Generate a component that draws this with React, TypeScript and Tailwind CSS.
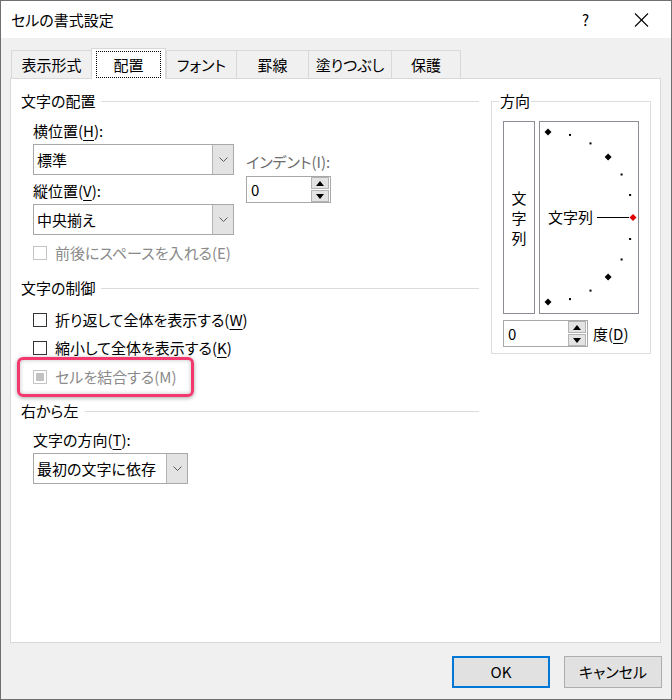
import React from "react";

const Chevron = () => (
  <svg width="9" height="5" viewBox="0 0 9 5">
    <polyline points="0.5,0.5 4.5,4.5 8.5,0.5" fill="none" stroke="#5a5a5a" strokeWidth="1" />
  </svg>
);

const Select = ({ text, w }: { text: string; w: string }) => (
  <div className={`flex h-[31px] ${w} border border-[#a8a8a8] bg-white`}>
    <div className="flex flex-1 items-center pl-[3px]">{text}</div>
    <div className="flex w-[21px] items-center justify-center border-l border-[#b4b4b4] bg-[#e3e3e3]">
      <Chevron />
    </div>
  </div>
);

const SpinButtons = () => (
  <div className="mr-[1px] flex flex-col gap-px">
    <div className="flex h-[12px] w-[18px] items-center justify-center border border-[#b4b4b4] bg-[#e3e3e3]">
      <svg width="8" height="5" viewBox="0 0 8 5">
        <polygon points="0,5 8,5 4,0" fill="#000" />
      </svg>
    </div>
    <div className="flex h-[12px] w-[18px] items-center justify-center border border-[#b4b4b4] bg-[#e3e3e3]">
      <svg width="8" height="5" viewBox="0 0 8 5">
        <polygon points="0,0 8,0 4,5" fill="#000" />
      </svg>
    </div>
  </div>
);

const Spinner = () => (
  <div className="flex h-[27px] w-[85px] items-center border border-[#a8a8a8] bg-white">
    <span className="flex-1 pl-[4px]">0</span>
    <SpinButtons />
  </div>
);

const GroupHeader = ({ text, className }: { text: string; className?: string }) => (
  <div className={`flex h-[20px] items-center gap-[6px] ${className ?? ""}`}>
    <span>{text}</span>
    <div className="h-px flex-1 bg-[#dcdcdc]" />
  </div>
);

const U = ({ c }: { c: string }) => <span className="underline underline-offset-[3px]">{c}</span>;

const Check = ({ children, disabled, mixed }: { children: React.ReactNode; disabled?: boolean; mixed?: boolean }) => (
  <div className="flex h-[20px] items-center gap-[8px]">
    <div
      className={`flex h-[14px] w-[14px] items-center justify-center border bg-white ${
        disabled ? "border-[#c4c4c4]" : "border-[#333333]"
      }`}
    >
      {mixed && <div className="h-[8px] w-[8px] bg-[#c2c2c2]" />}
    </div>
    <span className={disabled ? "text-[#8a8a8a]" : "text-black"}>{children}</span>
  </div>
);

const tabs = [
  { t: "表示形式", w: "w-[80px]" },
  { t: "配置", w: "w-[75px]", sel: true },
  { t: "フォント", w: "w-[70px]" },
  { t: "罫線", w: "w-[72px]" },
  { t: "塗りつぶし", w: "w-[83px]" },
  { t: "保護", w: "w-[70px]", last: true },
];

const Dial = () => {
  const cx = 8;
  const cy = 95;
  const r = 85;
  const items: React.ReactNode[] = [];
  for (let a = 90; a >= -90; a -= 15) {
    if (a === 0) continue;
    const rad = (a * Math.PI) / 180;
    const x = cx + r * Math.cos(rad);
    const y = cy - r * Math.sin(rad);
    if (a % 45 === 0) {
      items.push(
        <polygon
          key={a}
          points={`${x},${y - 3.5} ${x + 3.5},${y} ${x},${y + 3.5} ${x - 3.5},${y}`}
          fill="#000"
        />
      );
    } else {
      items.push(<rect key={a} x={x - 1} y={y - 1} width="2" height="2" fill="#000" />);
    }
  }
  return (
    <svg width="98" height="191" viewBox="0 0 98 191">
      {items}
      <text x="8" y="100.5" fontSize="15" fontFamily="'Noto Sans CJK JP', sans-serif" fill="#000">
        文字列
      </text>
      <line x1="57" y1="95.5" x2="89" y2="95.5" stroke="#000" strokeWidth="1" />
      <polygon points="93,92 96.5,95.5 93,99 89.5,95.5" fill="#e00000" />
    </svg>
  );
};

export default function App() {
  return (
    <div className="flex h-[700px] w-[672px] flex-col border border-[#6f6f6f] bg-[#f0f0f0] font-['Noto_Sans_CJK_JP',sans-serif] text-[15px] leading-[20px] text-black [font-feature-settings:'palt']">
      {/* Title bar */}
      <div className="flex h-[37px] items-center bg-white pl-[10px] pr-[22px]">
        <span>セルの書式設定</span>
        <span className="ml-auto">?</span>
        <svg className="ml-[45px]" width="15" height="14" viewBox="0 0 15 14">
          <line x1="1" y1="0.5" x2="14" y2="13.5" stroke="#000" strokeWidth="1.1" />
          <line x1="14" y1="0.5" x2="1" y2="13.5" stroke="#000" strokeWidth="1.1" />
        </svg>
      </div>

      {/* Tabs */}
      <div className="mt-[10px] ml-[10px] flex h-[30px] items-end">
        {tabs.map((tab) =>
          tab.sel ? (
            <div
              key={tab.t}
              className={`relative z-10 -mb-px flex h-[31px] ${tab.w} items-start justify-center border-x border-t border-[#d9d9d9] bg-white pt-[2px]`}
            >
              <div className="flex h-[27px] w-[65px] items-center justify-center border border-dotted border-black">
                {tab.t}
              </div>
            </div>
          ) : (
            <div
              key={tab.t}
              className={`flex h-[28px] ${tab.w} items-center justify-center border-l border-t border-[#d9d9d9] ${
                tab.last ? "border-r" : ""
              }`}
            >
              {tab.t}
            </div>
          )
        )}
      </div>

      {/* Panel */}
      <div className="ml-[9px] flex h-[565px] w-[651px] border border-[#d9d9d9] bg-white pl-[10px] pt-[12px]">
        {/* Left column */}
        <div className="flex w-[458px] flex-col">
          <GroupHeader text="文字の配置" />
          <div className="flex flex-col pl-[12px]">
            <div className="mt-[10px] h-[20px]">
              横位置(<U c="H" />):
            </div>
            <div className="mt-[3px] flex items-start">
              <div className="flex flex-col">
                <Select text="標準" w="w-[201px]" />
                <div className="mt-[6px] h-[20px]">
                  縦位置(<U c="V" />):
                </div>
                <div className="mt-[3px]">
                  <Select text="中央揃え" w="w-[201px]" />
                </div>
              </div>
              <div className="ml-[12px] mt-[8px] flex flex-col">
                <div className="h-[20px] text-[#6d6d6d]">インデント(I):</div>
                <div className="mt-[4px]">
                  <Spinner />
                </div>
              </div>
            </div>
            <div className="mt-[8px]">
              <Check disabled>前後にスペースを入れる(E)</Check>
            </div>
          </div>

          <GroupHeader text="文字の制御" className="mt-[15px]" />
          <div className="flex flex-col pl-[12px]">
            <div className="mt-[12px]">
              <Check>
                折り返して全体を表示する(<U c="W" />)
              </Check>
            </div>
            <div className="mt-[8px]">
              <Check>
                縮小して全体を表示する(<U c="K" />)
              </Check>
            </div>
            <div className="relative mt-[9px]">
              <Check disabled mixed>
                セルを結合する(M)
              </Check>
              <div className="absolute left-[-16px] top-[-10px] h-[40px] w-[177px] rounded-[6px] border-[3px] border-[#f2386d] shadow-[0_1px_4px_rgba(0,0,0,0.35),inset_0_0_4px_rgba(0,0,0,0.25)]" />
            </div>
          </div>

          <GroupHeader text="右から左" className="mt-[14px]" />
          <div className="flex flex-col pl-[12px]">
            <div className="mt-[9px] h-[20px]">
              文字の方向(<U c="T" />):
            </div>
            <div className="mt-[3px]">
              <Select text="最初の文字に依存" w="w-[155px]" />
            </div>
          </div>
        </div>

        {/* Right column: orientation */}
        <fieldset className="ml-[12px] h-[263px] w-[159px] border border-[#dcdcdc] px-0 pb-[7px]">
          <legend className="ml-[7px] px-[1px] leading-[20px]">方向</legend>
          <div className="flex flex-col px-[11px] pt-[10px]">
            <div className="flex gap-[4px]">
              <div className="flex h-[193px] w-[32px] flex-col items-center justify-center border border-[#8a8d94] bg-white">
                <span>文</span>
                <span>字</span>
                <span>列</span>
              </div>
              <div className="h-[193px] w-[100px] border border-[#8a8d94] bg-white">
                <Dial />
              </div>
            </div>
            <div className="mt-[6px] flex items-center gap-[5px]">
              <Spinner />
              <span>
                度(<U c="D" />)
              </span>
            </div>
          </div>
        </fieldset>
      </div>

      {/* Buttons */}
      <div className="mt-[13px] flex justify-end gap-[14px] pr-[9px]">
        <button className="flex h-[32px] w-[98px] items-center justify-center border-2 border-[#0078d7] bg-[#e1e1e1]">
          OK
        </button>
        <button className="flex h-[32px] w-[98px] items-center justify-center border border-[#adadad] bg-[#e1e1e1]">
          キャンセル
        </button>
      </div>
    </div>
  );
}
